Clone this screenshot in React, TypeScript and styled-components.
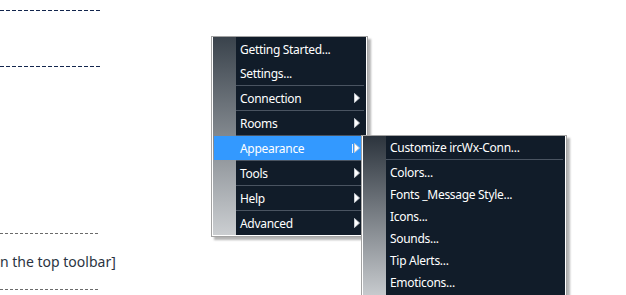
import React from "react";
import styled, { createGlobalStyle } from "styled-components";

const MENU_FONT = `"Noto Sans", "Open Sans", sans-serif`;

const GlobalStyle = createGlobalStyle`
  html, body {
    margin: 0;
    padding: 0;
    background: #ffffff;
    overflow: hidden;
  }
  body {
    width: 626px;
    height: 295px;
    position: relative;
  }
`;

type MenuEntry = { label: string; arrow?: boolean; active?: boolean; sep?: boolean };

const mainItems: MenuEntry[] = [
  { label: "Getting Started..." },
  { label: "Settings...", sep: true },
  { label: "Connection", arrow: true, sep: true },
  { label: "Rooms", arrow: true, sep: true },
  { label: "Appearance", arrow: true, active: true, sep: true },
  { label: "Tools", arrow: true, sep: true },
  { label: "Help", arrow: true, sep: true },
  { label: "Advanced", arrow: true },
];

const subItems: MenuEntry[] = [
  { label: "Customize ircWx-Conn...", sep: true },
  { label: "Colors..." },
  { label: "Fonts _Message Style..." },
  { label: "Icons..." },
  { label: "Sounds..." },
  { label: "Tip Alerts..." },
  { label: "Emoticons..." },
];

const App = () => {
  return (
    <>
      <GlobalStyle />
      <Doc>
        <Rule $tone="#13264d" $after={55} />
        <Rule $tone="#13264d" $after={166} />
        <Rule $tone="#6a6a6a" $after={0} $dash={3} />
        <DocText>n the top toolbar]</DocText>
        <Rule $tone="#6a6a6a" $after={0} $dash={3} />
      </Doc>

      <Menu $left={211} $top={36} $width={157} $strip="#3a434c, #cbced1">
        {mainItems.map((item) => (
          <React.Fragment key={item.label}>
            <Item $active={item.active} $height={24} $pad={26}>
              {item.label}
              {item.arrow && (
                <Arrow>
                  {item.active && <ArrowBar />}
                  <svg width="6" height="10" viewBox="0 0 6 10">
                    <path d="M0.5 0.5 L5.5 5 L0.5 9.5 Z" fill="#ffffff" stroke="#c8ccd2" strokeWidth="1" />
                  </svg>
                </Arrow>
              )}
            </Item>
            {item.sep && <Separator $inset={23} $above={0} $below={0} />}
          </React.Fragment>
        ))}
      </Menu>

      <Menu $left={361} $top={135} $width={206} $strip="#2c343d, #d2d5d8" $tail={14}>
        {subItems.map((item) => (
          <React.Fragment key={item.label}>
            <Item $height={22} $pad={26}>
              {item.label}
            </Item>
            {item.sep && <Separator $inset={23} $above={1} $below={1} />}
          </React.Fragment>
        ))}
      </Menu>
    </>
  );
};

const Doc = styled.div`
  display: flex;
  flex-direction: column;
  width: 100px;
  padding-top: 10px;
`;

const Rule = styled.div<{ $tone: string; $after: number; $dash?: number }>`
  height: 1px;
  margin-bottom: ${(p) => p.$after}px;
  background: repeating-linear-gradient(
    to right,
    ${(p) => p.$tone} 0 ${(p) => p.$dash ?? 4}px,
    transparent ${(p) => p.$dash ?? 4}px ${(p) => (p.$dash ?? 4) + 2}px
  );
`;

const DocText = styled.div`
  height: 55px;
  line-height: 55px;
  white-space: nowrap;
  font-family: "Noto Sans", "Open Sans", sans-serif;
  font-size: 14px;
  color: #2b3442;
`;

const Menu = styled.div<{ $left: number; $top: number; $width: number; $strip: string; $tail?: number }>`
  position: absolute;
  left: ${(p) => p.$left}px;
  top: ${(p) => p.$top}px;
  width: ${(p) => p.$width}px;
  box-sizing: border-box;
  border: 1px solid #a3a3a3;
  padding: 0 1px ${(p) => 1 + (p.$tail ?? 0)}px;
  background: #ffffff;
  box-shadow: 3px 3px 2px rgba(0, 0, 0, 0.3);
  font-family: ${MENU_FONT};
  font-size: 12px;
  letter-spacing: -0.3px;
  color: #ffffff;

  & > * {
    position: relative;
  }

  &::before {
    content: "";
    position: absolute;
    inset: 1px;
    top: 0;
    background: linear-gradient(${(p) => p.$strip}) left / 23px 100% no-repeat, #111c29;
  }
`;

const Item = styled.div<{ $active?: boolean; $height: number; $pad: number }>`
  display: flex;
  align-items: center;
  height: ${(p) => p.$height}px;
  padding-left: ${(p) => p.$pad}px;
  margin-left: 1px;
  margin-right: 5px;
  background: ${(p) => (p.$active ? "#3399ff" : "transparent")};
  white-space: nowrap;
`;

const Arrow = styled.span`
  margin-left: auto;
  margin-right: 1px;
  display: flex;
  align-items: center;
  gap: 1px;
`;

const ArrowBar = styled.span`
  width: 1px;
  height: 9px;
  background: #e8f2ff;
`;

const Separator = styled.div<{ $inset: number; $above: number; $below: number }>`
  height: 1px;
  margin: ${(p) => p.$above}px 2px ${(p) => p.$below}px ${(p) => p.$inset}px;
  background: #4a5461;
`;

export default App;
